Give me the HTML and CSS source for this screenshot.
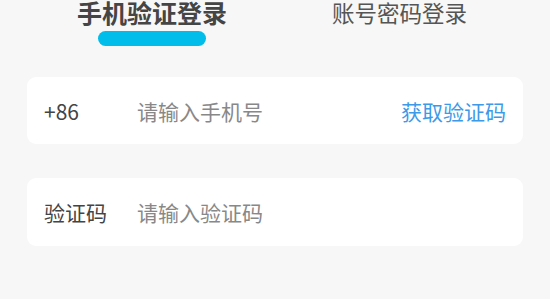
FILE: index.html
```html
<!DOCTYPE html>
<html lang="zh-CN">
  <head>
    <meta charset="UTF-8" />
    <meta name="viewport" content="width=device-width, initial-scale=1.0" />
    <title>登录</title>
    <link rel="stylesheet" href="styles.css">
  </head>
  <body>
    <div class="page">
      <div class="tabs">
        <div class="tab active">
          <span class="tab-text">手机验证登录</span>
          <span class="tab-bar"></span>
        </div>
        <div class="tab">
          <span class="tab-text">账号密码登录</span>
        </div>
      </div>

      <div class="field">
        <span class="field-label">+86</span>
        <input type="text" class="field-input" placeholder="请输入手机号" />
        <a class="get-code">获取验证码</a>
      </div>

      <div class="field">
        <span class="field-label">验证码</span>
        <input type="text" class="field-input" placeholder="请输入验证码" />
      </div>
    </div>
  </body>
</html>
```

FILE: styles.css
```css
body {
    margin: 0;
    background-color: #f7f7f7;
    font-family: "Noto Sans CJK SC", "Noto Sans", sans-serif;
}

.page {
    width: 550px;
    height: 299px;
    overflow: hidden;
}

.tabs {
    display: flex;
    height: 77px;
}

.tab {
    display: flex;
    flex-direction: column;
    align-items: center;
}

.tab:first-child {
    margin-left: 77px;
}

.tab:last-child {
    margin-left: 105px;
}

.tab-text {
    font-size: 22.5px;
    line-height: 24px;
    padding-bottom: 4px;
    color: #555;
    white-space: nowrap;
}

.tab.active .tab-text {
    font-size: 25px;
    font-weight: bold;
    color: #454545;
}

.tab-bar {
    display: block;
    width: 108px;
    height: 15px;
    margin-top: 3px;
    border-radius: 8px;
    background-color: #00bde9;
}

.field {
    display: flex;
    align-items: center;
    height: 67px;
    margin: 0 27px 34px 27px;
    padding: 0 17px;
    background-color: #fff;
    border-radius: 9px;
}

.field + .field {
    height: 68px;
}

.field-label {
    width: 93px;
    font-size: 21px;
    color: #444;
}

.field-input {
    flex: 1;
    min-width: 0;
    border: none;
    outline: none;
    padding: 0;
    font-family: inherit;
    font-size: 21px;
    color: #333;
    background: transparent;
}

.field-input::placeholder {
    color: #888;
}

.get-code {
    font-size: 21px;
    color: #3d9ae8;
    cursor: pointer;
}
```
